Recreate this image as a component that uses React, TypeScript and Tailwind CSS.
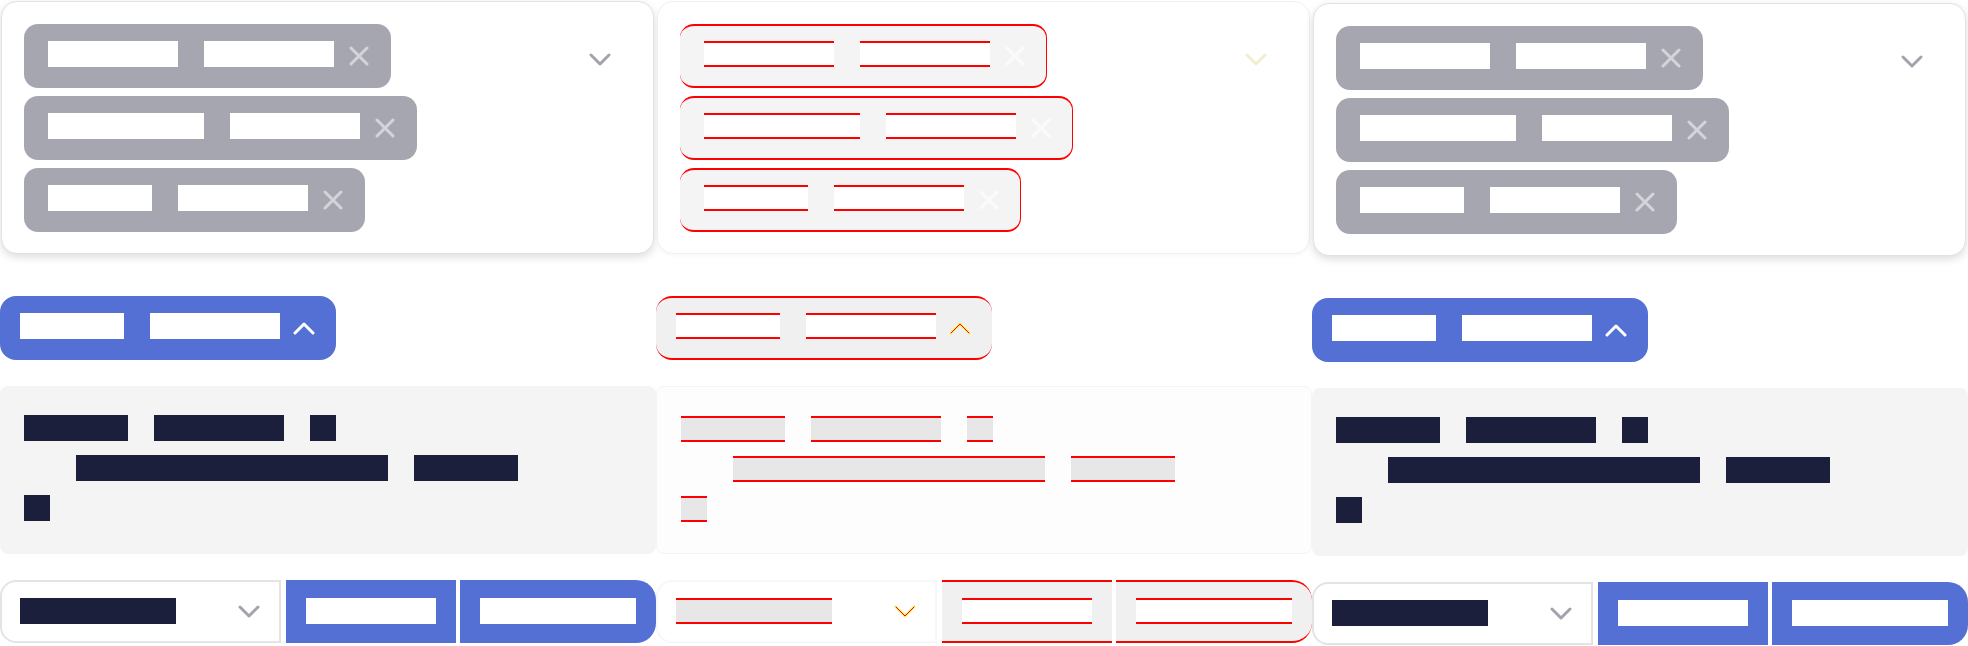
import clsx from 'clsx'

type Variant = 'base' | 'diff'

type Tone = 'light' | 'dark'

const CHIPS: number[][] = [
  [130, 130],
  [156, 130],
  [104, 130],
]

const NOTE_LINES: { indent: number; words: number[] }[] = [
  { indent: 0, words: [104, 130, 26] },
  { indent: 52, words: [312, 104] },
  { indent: 0, words: [26] },
]

function Word({
  w,
  tone,
  variant,
  className,
}: {
  w: number
  tone: Tone
  variant: Variant
  className?: string
}) {
  const diff = variant === 'diff'
  return (
    <span
      style={{ width: w }}
      className={clsx(
        'block h-[26px] shrink-0',
        tone === 'light' && 'bg-white',
        tone === 'dark' && (diff ? 'bg-[#e7e7e7]' : 'bg-[#1c1f3c]'),
        diff && 'border-y-2 border-[#ff0000]',
        className
      )}
    />
  )
}

function Chevron({
  up,
  color,
  diff,
  className,
}: {
  up?: boolean
  color: string
  diff?: boolean
  className?: string
}) {
  const points = up ? '2,12 11,3 20,12' : '2,2 11,11 20,2'
  return (
    <svg width="22" height="14" viewBox="0 0 22 14" className={clsx('block shrink-0', className)}>
      {diff ? (
        <>
          <polyline points={points} fill="none" stroke="#f6ee7a" strokeWidth="3" strokeLinecap="round" strokeLinejoin="round" />
          <polyline points={points} fill="none" stroke="#ff0000" strokeWidth="1" strokeLinecap="round" strokeLinejoin="round" />
        </>
      ) : (
        <polyline points={points} fill="none" stroke={color} strokeWidth="3" strokeLinecap="round" strokeLinejoin="round" />
      )}
    </svg>
  )
}

function XMark({ color }: { color: string }) {
  return (
    <svg width="22" height="20" viewBox="0 0 22 20" className="ml-[14px] block shrink-0">
      <path d="M3 2 L19 18 M19 2 L3 18" fill="none" stroke={color} strokeWidth="3" strokeLinecap="round" />
    </svg>
  )
}

function Chip({ words, variant }: { words: number[]; variant: Variant }) {
  const diff = variant === 'diff'
  return (
    <div
      className={clsx(
        'flex h-[64px] w-fit items-center rounded-[14px] pl-[24px]',
        diff
          ? 'border-y-2 border-r border-y-[#ff0000] border-r-[#ff0000] bg-[#f4f4f4] pr-[20px]'
          : 'bg-[#a6a6b1] pr-[21px]'
      )}
    >
      <Word w={words[0]} tone="light" variant={variant} className="mb-[4px]" />
      <Word w={words[1]} tone="light" variant={variant} className="mb-[4px] ml-[26px]" />
      <XMark color={diff ? '#fbfbfb' : '#d4d4da'} />
    </div>
  )
}

function Column({ variant, className }: { variant: Variant; className?: string }) {
  const diff = variant === 'diff'
  const blue = diff ? 'bg-[#f0f0f0] border-y-2 border-[#ff0000]' : 'bg-[#5470d4]'

  return (
    <div className={clsx('w-[656px] shrink-0', className)}>
      {/* multi select */}
      <div
        className={clsx(
          'ml-[1px] mt-[1px] flex h-[253px] w-[653px] rounded-[16px] border bg-white px-[22px] pt-[22px]',
          diff
            ? 'border-[#f0f0f0] shadow-[0_2px_4px_rgba(0,0,0,0.03)]'
            : 'border-[#e2e2e2] shadow-[0_3px_9px_rgba(0,0,0,0.14)]'
        )}
      >
        <div className="flex flex-1 flex-col gap-2">
          {CHIPS.map((words, i) => (
            <Chip key={i} words={words} variant={variant} />
          ))}
        </div>
        <Chevron color={diff ? '#f1efcf' : '#a3a3af'} className="mr-[20px] mt-[29px]" />
      </div>

      {/* open trigger */}
      <div className={clsx('mt-[42px] flex h-[64px] w-fit items-center rounded-[16px] pl-[20px] pr-[21px]', blue)}>
        <Word w={104} tone="light" variant={variant} className="mb-[4px]" />
        <Word w={130} tone="light" variant={variant} className="mb-[4px] ml-[26px]" />
        <Chevron up color="#ffffff" diff={diff} className="ml-[13px]" />
      </div>

      {/* note */}
      <div
        className={clsx(
          'mt-[26px] h-[168px] rounded-[8px] pl-[24px] pt-[29px]',
          diff ? 'border border-[#f4f4f4] bg-[#fdfdfd]' : 'bg-[#f4f4f4]'
        )}
      >
        {NOTE_LINES.map((line, i) => (
          <div key={i} className="mb-[14px] flex" style={{ paddingLeft: line.indent }}>
            {line.words.map((w, j) => (
              <Word key={j} w={w} tone="dark" variant={variant} className={j > 0 ? 'ml-[26px]' : undefined} />
            ))}
          </div>
        ))}
      </div>

      {/* select + buttons */}
      <div className="mt-[26px] flex h-[63px]">
        <div
          className={clsx(
            'flex w-[281px] items-center rounded-l-[16px] border-2 bg-white pl-[18px]',
            diff ? 'border-[#f7f7f7]' : 'border-[#e4e4e4]'
          )}
        >
          <Word w={156} tone="dark" variant={variant} className="mb-[2px]" />
          <Chevron color="#a3a3af" diff={diff} className="ml-auto mr-[19px]" />
        </div>
        <div className={clsx('ml-[5px] flex w-[170px] items-center justify-center', blue)}>
          <Word w={130} tone="light" variant={variant} className="mb-[2px]" />
        </div>
        <div className={clsx('ml-[4px] flex w-[196px] items-center justify-center rounded-r-[20px]', blue)}>
          <Word w={156} tone="light" variant={variant} className="mb-[2px]" />
        </div>
      </div>
    </div>
  )
}

export default function App() {
  return (
    <div className="flex h-[646px] w-[1968px] overflow-hidden bg-white">
      <Column variant="base" />
      <Column variant="diff" />
      <Column variant="base" className="pt-[2px]" />
    </div>
  )
}
